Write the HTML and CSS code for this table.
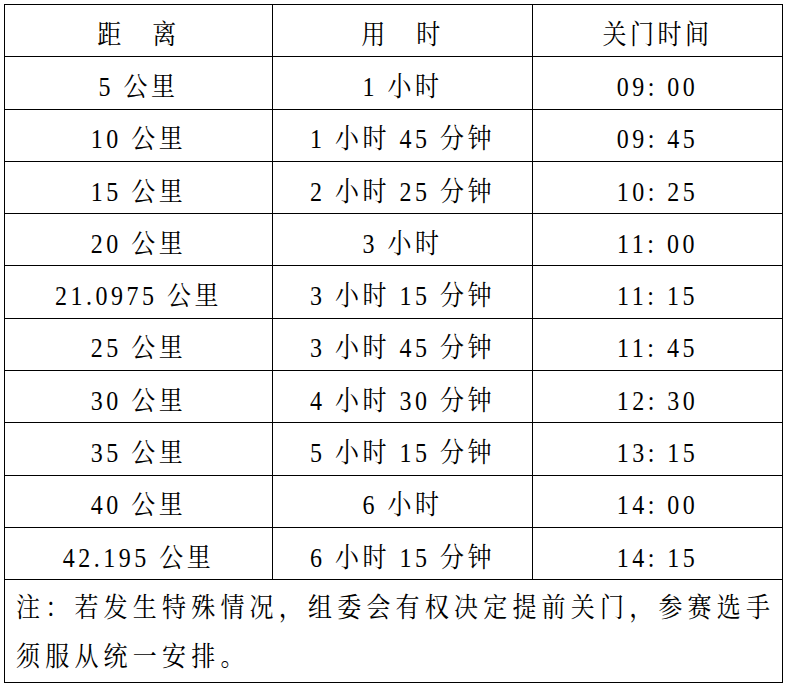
FILE: index.html
```html
<!DOCTYPE html>
<html lang="zh-CN">
<head>
<meta charset="utf-8">
<link rel="stylesheet" href="styles.css">
</head>
<body>
<table class="cutoff">
  <colgroup>
    <col class="c1"><col class="c2"><col class="c3">
  </colgroup>
  <tr><td><span class="t">距　离</span></td><td><span class="t">用　时</span></td><td><span class="t">关门时间</span></td></tr>
  <tr><td><span class="t">5 公里</span></td><td><span class="t">1 小时</span></td><td><span class="t">09: 00</span></td></tr>
  <tr><td><span class="t">10 公里</span></td><td><span class="t">1 小时 45 分钟</span></td><td><span class="t">09: 45</span></td></tr>
  <tr><td><span class="t">15 公里</span></td><td><span class="t">2 小时 25 分钟</span></td><td><span class="t">10: 25</span></td></tr>
  <tr><td><span class="t">20 公里</span></td><td><span class="t">3 小时</span></td><td><span class="t">11: 00</span></td></tr>
  <tr><td><span class="t">21.0975 公里</span></td><td><span class="t">3 小时 15 分钟</span></td><td><span class="t">11: 15</span></td></tr>
  <tr><td><span class="t">25 公里</span></td><td><span class="t">3 小时 45 分钟</span></td><td><span class="t">11: 45</span></td></tr>
  <tr><td><span class="t">30 公里</span></td><td><span class="t">4 小时 30 分钟</span></td><td><span class="t">12: 30</span></td></tr>
  <tr><td><span class="t">35 公里</span></td><td><span class="t">5 小时 15 分钟</span></td><td><span class="t">13: 15</span></td></tr>
  <tr><td><span class="t">40 公里</span></td><td><span class="t">6 小时</span></td><td><span class="t">14: 00</span></td></tr>
  <tr><td><span class="t">42.195 公里</span></td><td><span class="t">6 小时 15 分钟</span></td><td><span class="t">14: 15</span></td></tr>
  <tr><td class="note" colspan="3"><span class="t">注：若发生特殊情况，组委会有权决定提前关门，参赛选手</span><br><span class="t">须服从统一安排。</span></td></tr>
</table>
</body>
</html>
```
FILE: styles.css
```css
html, body {
  margin: 0;
  padding: 0;
  background: #fff;
}
body {
  padding: 4px 0 0 4px;
  font-family: "Liberation Serif", "Noto Serif CJK SC", "Noto Sans CJK SC", serif;
  color: #000;
}
.cutoff {
  border-collapse: collapse;
  table-layout: fixed;
  width: 778px;
}
.c1 { width: 268px; }
.c2 { width: 260px; }
.c3 { width: 250px; }
.cutoff td {
  border: 1.5px solid #000;
  height: 51.3px;
  padding: 0;
  text-align: center;
  vertical-align: middle;
  font-size: 24px;
  letter-spacing: 3.5px;
  line-height: 1;
  white-space: nowrap;
}
.t {
  display: inline-block;
  transform: scaleY(1.12);
  padding-top: 8px;
  line-height: 30px;
}
.cutoff td.note {
  text-align: left;
  vertical-align: top;
  padding: 4px 0 0 11px;
  letter-spacing: 5.2px;
  height: 98px;
}
.note .t {
  padding-top: 0;
  line-height: 49px;
  height: 49px;
}
```
